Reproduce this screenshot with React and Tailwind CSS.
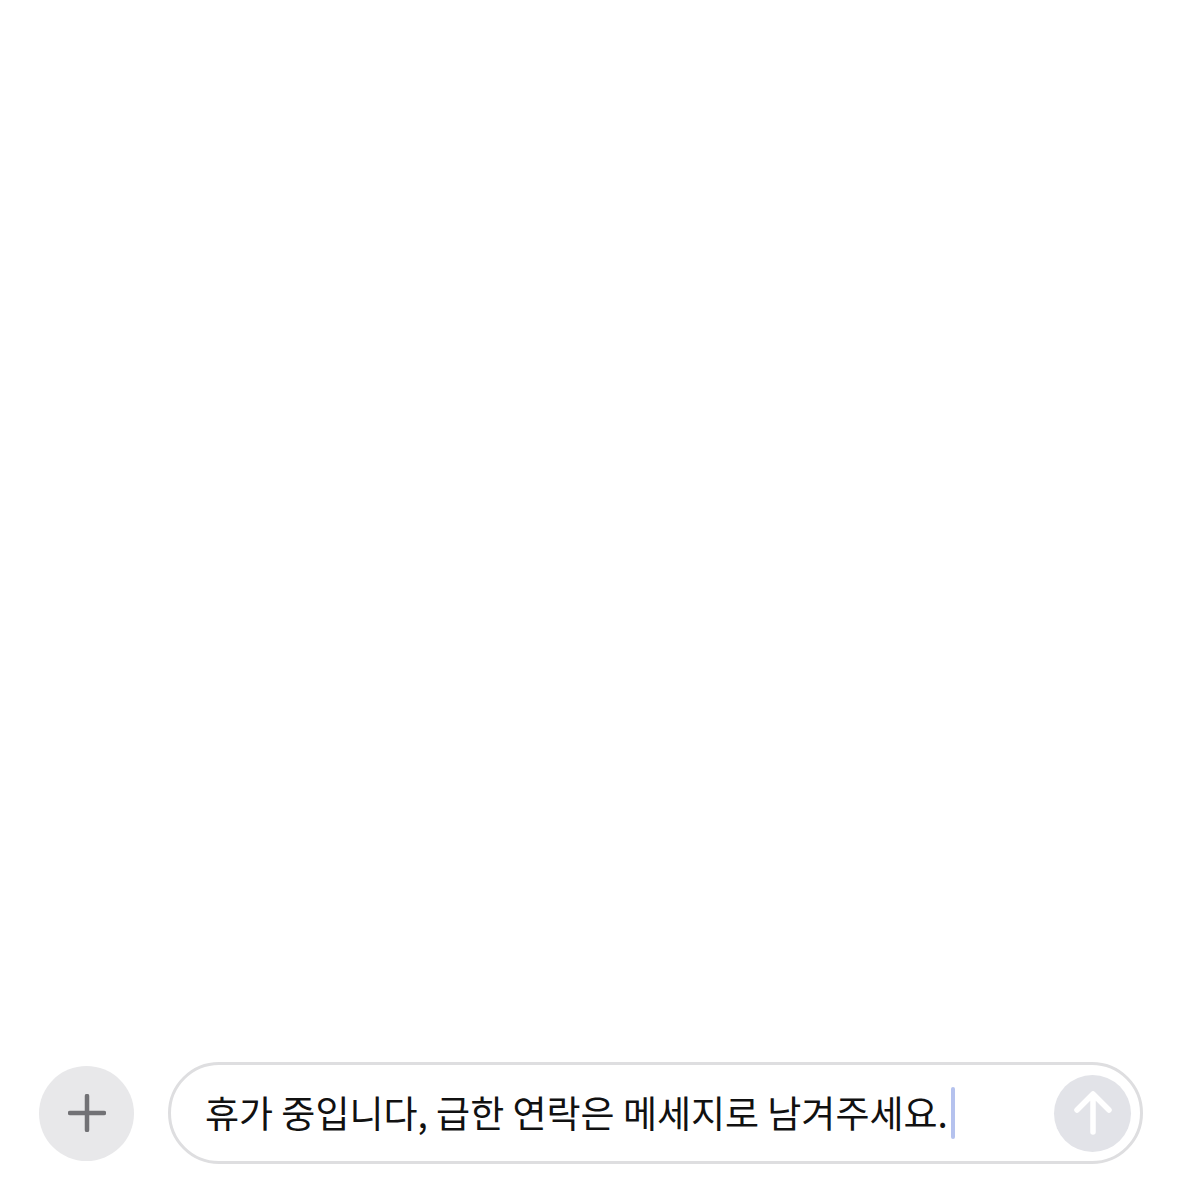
import React from 'react';

const PlusIcon = () => (
  <svg width="38" height="38" viewBox="0 0 38 38" fill="none">
    <path d="M19 2v34M2 19h34" stroke="#727276" strokeWidth="4.5" strokeLinecap="round" />
  </svg>
);

const ArrowUp = () => (
  <svg width="38" height="46" viewBox="0 0 38 46" fill="none">
    <path d="M19 42V5M3 20L19 4l16 16" stroke="#ffffff" strokeWidth="5.5" strokeLinecap="round" strokeLinejoin="round" />
  </svg>
);

export default function App() {
  return (
    <div className="flex h-[1200px] w-[1200px] flex-col justify-end bg-white pb-[36px]" style={{ fontFamily: '"Noto Sans CJK KR", "Noto Sans", sans-serif' }}>
      <div className="flex items-center pl-[39px] pr-[57px]">
        <button className="flex h-[95px] w-[95px] shrink-0 items-center justify-center rounded-full bg-[#e8e8ea]">
          <PlusIcon />
        </button>
        <div className="ml-[34px] flex h-[102px] flex-1 items-center rounded-full border-[3px] border-[#dedee0] bg-white pl-[34px] pr-[9px]">
          <div className="flex flex-1 items-center text-[37px] leading-none text-[#111111]">
            <span className="-mt-[2px]">휴가 중입니다, 급한 연락은 메세지로 남겨주세요.</span>
            <span className="ml-[3px] inline-block h-[52px] w-[4px] rounded-full bg-[#b5c2ee]" />
          </div>
          <div className="flex h-[77px] w-[77px] shrink-0 items-center justify-center rounded-full bg-[#e2e3e8]">
            <ArrowUp />
          </div>
        </div>
      </div>
    </div>
  );
}
